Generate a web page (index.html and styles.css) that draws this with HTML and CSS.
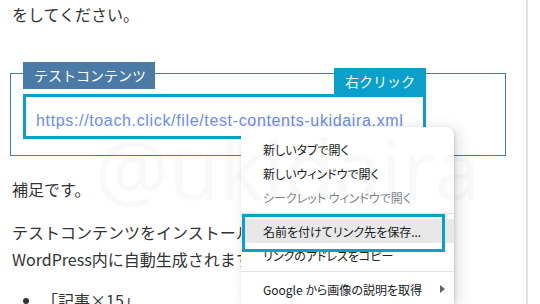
FILE: index.html
```html
<!DOCTYPE html>
<html lang="ja">
<head>
<meta charset="utf-8">
<link rel="stylesheet" href="styles.css">
</head>
<body>
<div class="page">
  <p class="lead">をしてください。</p>
  <div class="box">
    <div class="box-head">
      <span class="box-title">テストコンテンツ</span>
      <span class="tag">右クリック</span>
    </div>
    <div class="url-box"><a class="url">https://toach.click/file/test-contents-ukidaira.xml</a></div>
  </div>
  <p class="note">補足です。</p>
  <p class="desc">テストコンテンツをインストールすると、以下の内容が<br>WordPress内に自動生成されます。</p>
  <ul class="list"><li>「記事×15」</li></ul>
</div>
<div class="watermark">@ukidaira</div>
<div class="menu">
  <div class="item">新しいタブで開く</div>
  <div class="item">新しいウィンドウで開く</div>
  <div class="item muted">シークレット ウィンドウで開く</div>
  <div class="sep"></div>
  <div class="item active">名前を付けてリンク先を保存...</div>
  <div class="item">リンクのアドレスをコピー</div>
  <div class="sep"></div>
  <div class="item">Google から画像の説明を取得<span class="arrow"></span></div>
</div>
<div class="focus"></div>
</body>
</html>
```

FILE: styles.css
```css
html, body {
  margin: 0;
  padding: 0;
  background: #fff;
  overflow: hidden;
}
body {
  width: 540px;
  height: 304px;
  position: relative;
  font-family: "Noto Sans CJK JP", "Noto Sans", sans-serif;
  color: #333;
}
.page {
  box-sizing: border-box;
  width: 528px;
  height: 304px;
  overflow: hidden;
  padding-left: 12px;
  border-right: 2px solid #e4e4e4;
  font-size: 16px;
  line-height: 27px;
}
.lead {
  margin: 0;
  line-height: 28px;
}
.box {
  box-sizing: border-box;
  margin: 45px 0 0 -2px;
  width: 496px;
  border: 1px solid #4a7aa7;
  padding-bottom: 16px;
}
.box-head {
  display: flex;
  justify-content: space-between;
  margin: -12px 0 0 12px;
  width: 403px;
  height: 32px;
}
.box-title {
  align-self: flex-start;
  height: 27px;
  line-height: 27px;
  padding: 0 9px 0 11px;
  background: #4a7ba7;
  color: #fff;
  font-size: 14px;
}
.tag {
  align-self: flex-end;
  height: 26px;
  line-height: 26px;
  padding: 0 11px;
  background: #0ba0cb;
  color: #fff;
  font-size: 14px;
}
.url-box {
  box-sizing: border-box;
  margin-left: 12px;
  width: 403px;
  height: 45px;
  border: 3px solid #0ba0cb;
  padding: 5px 0 0 10px;
  line-height: 34px;
}
.url {
  font-family: "Liberation Sans", Arial, sans-serif;
  font-size: 16px;
  letter-spacing: 0.65px;
  color: #6b8cf3;
  white-space: nowrap;
}
.note {
  margin: 20px 0 0;
}
.desc {
  margin: 16px 0 0;
  white-space: nowrap;
}
.list {
  margin: 14px 0 0;
  padding-left: 30px;
}
.watermark {
  position: absolute;
  left: 95px;
  top: 127px;
  font-family: "Noto Sans", sans-serif;
  font-size: 82px;
  line-height: 82px;
  color: rgba(0, 0, 0, 0.022);
  pointer-events: none;
  z-index: 3;
  white-space: nowrap;
}
.menu {
  position: absolute;
  left: 241px;
  top: 127px;
  width: 213px;
  height: 177px;
  overflow: hidden;
  padding-top: 10px;
  box-sizing: border-box;
  background: #fff;
  border-radius: 8px 8px 0 0;
  box-shadow: 1px 1px 3px rgba(0, 0, 0, 0.12), 4px 2px 14px rgba(0, 0, 0, 0.14);
  font-size: 12px;
  font-feature-settings: "palt";
  color: #202124;
  z-index: 2;
}
.item {
  display: flex;
  align-items: center;
  height: 24px;
  padding-left: 22px;
  padding-right: 8px;
  white-space: nowrap;
}
.item.muted {
  color: #80868b;
}
.item.active {
  background: #e8e8e8;
}
.sep {
  height: 1px;
  margin: 4px 0 5px;
  background: #e2e2e2;
}
.arrow {
  margin-left: auto;
  margin-right: 1px;
  width: 0;
  height: 0;
  border-top: 4px solid transparent;
  border-bottom: 4px solid transparent;
  border-left: 5px solid #606368;
}
.focus {
  position: absolute;
  left: 242px;
  top: 214px;
  width: 203px;
  height: 38px;
  box-sizing: border-box;
  border: 3px solid #0ba0cb;
  z-index: 4;
}
```
